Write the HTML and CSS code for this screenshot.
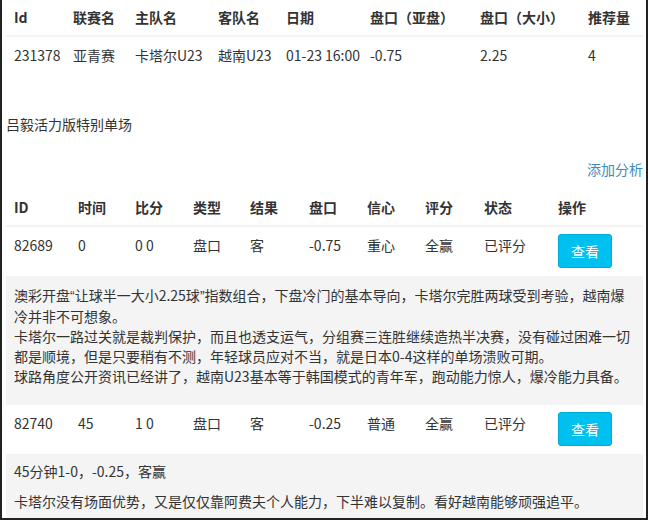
FILE: index.html
```html
<!DOCTYPE html>
<html lang="zh-CN">
<head>
  <meta charset="UTF-8">
  <title>单场分析</title>
  <link rel="stylesheet" href="styles.css">
</head>
<body>
  <div class="box_wrap">
    <table class="tbl tbl_match">
      <thead>
        <tr>
          <th>Id</th>
          <th>联赛名</th>
          <th>主队名</th>
          <th>客队名</th>
          <th>日期</th>
          <th>盘口（亚盘）</th>
          <th>盘口（大小）</th>
          <th>推荐量</th>
        </tr>
      </thead>
      <tbody>
        <tr>
          <td>231378</td>
          <td>亚青赛</td>
          <td>卡塔尔U23</td>
          <td>越南U23</td>
          <td>01-23 16:00</td>
          <td>-0.75</td>
          <td>2.25</td>
          <td>4</td>
        </tr>
      </tbody>
    </table>

    <p class="ttl_line">吕毅活力版特别单场</p>
    <div class="add_row"><a href="#">添加分析</a></div>

    <table class="tbl tbl_anl">
      <thead>
        <tr>
          <th>ID</th>
          <th>时间</th>
          <th>比分</th>
          <th>类型</th>
          <th>结果</th>
          <th>盘口</th>
          <th>信心</th>
          <th>评分</th>
          <th>状态</th>
          <th>操作</th>
        </tr>
      </thead>
      <tbody>
        <tr>
          <td>82689</td>
          <td>0</td>
          <td>0 0</td>
          <td>盘口</td>
          <td>客</td>
          <td>-0.75</td>
          <td>重心</td>
          <td>全赢</td>
          <td>已评分</td>
          <td><button class="btn_info">查看</button></td>
        </tr>
        <tr class="note_row">
          <td colspan="10">
            <p>澳彩开盘<span class="q">“</span>让球半一大小2.25球<span class="q">”</span>指数组合，下盘冷门的基本导向，卡塔尔完胜两球受到考验，越南爆冷并非不可想象。<br>卡塔尔一路过关就是裁判保护，而且也透支运气，分组赛三连胜继续造热半决赛，没有碰过困难一切都是顺境，但是只要稍有不测，年轻球员应对不当，就是日本0-4这样的单场溃败可期。<br>球路角度公开资讯已经讲了，越南U23基本等于韩国模式的青年军，跑动能力惊人，爆冷能力具备。</p>
          </td>
        </tr>
        <tr>
          <td>82740</td>
          <td>45</td>
          <td>1 0</td>
          <td>盘口</td>
          <td>客</td>
          <td>-0.25</td>
          <td>普通</td>
          <td>全赢</td>
          <td>已评分</td>
          <td><button class="btn_info">查看</button></td>
        </tr>
        <tr class="note_row note_short">
          <td colspan="10">
            <p>45分钟1-0，-0.25，客赢</p>
            <p>卡塔尔没有场面优势，又是仅仅靠阿费夫个人能力，下半难以复制。看好越南能够顽强追平。</p>
          </td>
        </tr>
      </tbody>
    </table>
  </div>
</body>
</html>
```

FILE: styles.css
```css
body {
  margin: 0;
  font-family: "Noto Sans CJK SC", "Noto Sans", sans-serif;
  font-size: 14px;
  line-height: 20px;
  color: #333;
  background: #fff;
}

.box_wrap {
  box-sizing: border-box;
  width: 648px;
  height: 520px;
  padding: 0 3px 0 4px;
  border: 2px solid #222;
  border-top: none;
  overflow: hidden;
}

.tbl {
  width: 637px;
  border-collapse: collapse;
  border-spacing: 0;
  table-layout: fixed;
}

.tbl_match { margin-top: -1px; }

.tbl th,
.tbl td {
  padding: 8px;
  text-align: left;
  vertical-align: top;
  white-space: nowrap;
}

.tbl th {
  font-weight: bold;
  border-bottom: 2px solid #f4f4f4;
}

.tbl td { border-top: 1px solid #f4f4f4; }

.tbl_match th:nth-child(1) { width: 43px; }
.tbl_match th:nth-child(2) { width: 46px; }
.tbl_match th:nth-child(3) { width: 67px; }
.tbl_match th:nth-child(4) { width: 52px; }
.tbl_match th:nth-child(5) { width: 68px; }
.tbl_match th:nth-child(6) { width: 94px; }
.tbl_match th:nth-child(7) { width: 92px; }
.tbl_match th:nth-child(8) { width: 47px; }

.tbl_anl th:nth-child(1) { width: 48px; }
.tbl_anl th:nth-child(2) { width: 41px; }
.tbl_anl th:nth-child(3) { width: 42px; }
.tbl_anl th:nth-child(4) { width: 41px; }
.tbl_anl th:nth-child(5) { width: 43px; }
.tbl_anl th:nth-child(6) { width: 42px; }
.tbl_anl th:nth-child(7) { width: 42px; }
.tbl_anl th:nth-child(8) { width: 43px; }
.tbl_anl th:nth-child(9) { width: 58px; }
.tbl_anl th:nth-child(10) { width: 77px; }

.ttl_line {
  margin: 41px 0 0;
}

.add_row {
  text-align: right;
  margin-top: 25px;
  margin-bottom: 10px;
}

.add_row a {
  color: #3c8dbc;
  text-decoration: none;
}

.btn_info {
  display: block;
  margin-top: -1px;
  padding: 6px 12px;
  font: inherit;
  line-height: 20px;
  color: #fff;
  background-color: #00c0ef;
  border: 1px solid #00acd6;
  border-radius: 3px;
  cursor: pointer;
}

.note_row td {
  background-color: #f4f4f4;
  white-space: normal;
}
.note_row p { margin: 0 0 10px; }
.note_row .q { font-family: "Liberation Sans", sans-serif; }
.note_short td { padding-top: 6px; }
```
